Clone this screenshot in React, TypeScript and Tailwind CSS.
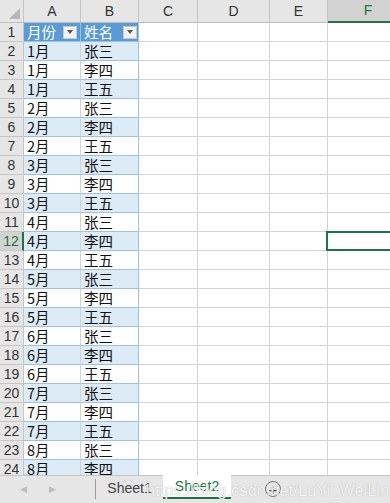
import React from 'react';

const cols = [
  { key: 'A', w: 'w-[57px]' },
  { key: 'B', w: 'w-[58px]' },
  { key: 'C', w: 'w-[59px]' },
  { key: 'D', w: 'w-[72px]' },
  { key: 'E', w: 'w-[58px]' },
  { key: 'F', w: 'w-[80px]' },
];

const names = ['张三', '李四', '王五'];
const rows: { month: string; name: string }[] = [];
for (let m = 1; m <= 8; m++) {
  for (const n of names) rows.push({ month: `${m}月`, name: n });
}

const cjk = { fontFamily: '"Noto Sans CJK SC", "Noto Sans", sans-serif' };
const latin = { fontFamily: '"Liberation Sans", Arial, sans-serif' };

function FilterButton() {
  return (
    <div className="w-[14px] h-[13px] bg-[#f2f2f2] border border-[#c9c9c9] flex items-center justify-center shrink-0">
      <div className="w-0 h-0 border-l-[3.5px] border-r-[3.5px] border-t-[4px] border-l-transparent border-r-transparent border-t-[#555]" />
    </div>
  );
}

export default function App() {
  return (
    <div className="w-[390px] h-[503px] overflow-hidden bg-white flex flex-col relative">
      {/* grid */}
      <div className="flex-1 overflow-hidden">
        {/* column headers */}
        <div className="flex h-[23px] bg-[#e6e6e6] border-b border-[#bdbdbd]" style={latin}>
          <div className="w-[24px] shrink-0 border-r border-[#c6c6c6] relative">
            <div
              className="absolute right-[3px] bottom-[3px] w-0 h-0"
              style={{ borderBottom: '11px solid #b7b7b7', borderLeft: '11px solid transparent' }}
            />
          </div>
          {cols.map((c) =>
            c.key === 'F' ? (
              <div key={c.key} className={`${c.w} shrink-0 bg-[#d2d2d2] border-b-2 border-[#217346] flex items-center justify-center text-[14px] text-[#217346] h-[23px]`}>
                {c.key}
              </div>
            ) : (
              <div key={c.key} className={`${c.w} shrink-0 border-r border-[#c6c6c6] flex items-center justify-center text-[14px] text-[#333]`}>
                {c.key}
              </div>
            )
          )}
        </div>

        {/* row 1: table header */}
        <div className="flex h-[19px]">
          <div className="w-[24px] shrink-0 bg-[#e6e6e6] border-r border-b border-[#c6c6c6] flex items-center justify-center text-[14px] text-[#333]" style={latin}>
            1
          </div>
          <div className="w-[57px] shrink-0 bg-[#5b9bd5] border-r border-b border-[#9bc2e6] flex items-center justify-between pl-[3px] pr-[3px] text-white text-[14.5px]" style={cjk}>
            <span className="leading-[18px]">月份</span>
            <FilterButton />
          </div>
          <div className="w-[58px] shrink-0 bg-[#5b9bd5] border-r border-b border-[#9bc2e6] flex items-center justify-between pl-[3px] pr-[1px] text-white text-[14.5px]" style={cjk}>
            <span className="leading-[18px]">姓名</span>
            <FilterButton />
          </div>
          <div className="w-[59px] shrink-0 border-r border-b border-[#d4d4d4]" />
          <div className="w-[72px] shrink-0 border-r border-b border-[#d4d4d4]" />
          <div className="w-[58px] shrink-0 border-r border-b border-[#d4d4d4]" />
          <div className="w-[80px] shrink-0 border-r border-b border-[#d4d4d4]" />
        </div>

        {rows.map((r, i) => {
          const n = i + 2;
          const band = n % 2 === 0 ? 'bg-[#ddebf7]' : 'bg-white';
          const sel = n === 12;
          return (
            <div key={n} className="flex h-[19px]">
              <div
                className={`w-[24px] shrink-0 border-b border-[#c6c6c6] flex items-center justify-center text-[14px] ${
                  sel ? 'bg-[#d2d2d2] text-[#217346] border-r-2 border-r-[#217346]' : 'bg-[#e6e6e6] text-[#333] border-r border-r-[#c6c6c6]'
                }`}
                style={latin}
              >
                {n}
              </div>
              <div className={`w-[57px] shrink-0 ${band} border-r border-r-[#d4d4d4] border-b border-b-[#9bc2e6] pl-[3px] text-[14.5px] leading-[18px] text-[#111]`} style={cjk}>
                {r.month}
              </div>
              <div className={`w-[58px] shrink-0 ${band} border-r border-r-[#9bc2e6] border-b border-b-[#9bc2e6] pl-[3px] text-[14.5px] leading-[18px] text-[#111]`} style={cjk}>
                {r.name}
              </div>
              <div className="w-[59px] shrink-0 border-r border-b border-[#d4d4d4]" />
              <div className="w-[72px] shrink-0 border-r border-b border-[#d4d4d4]" />
              <div className="w-[58px] shrink-0 border-r border-b border-[#d4d4d4]" />
              <div className="w-[80px] shrink-0 border-r border-b border-[#d4d4d4] relative">
                {sel && <div className="absolute -top-[1px] -bottom-[1px] -left-[2px] -right-[10px] border-y-2 border-l-2 border-[#217346]" />}
              </div>
            </div>
          );
        })}
      </div>

      {/* sheet tabs */}
      <div className="h-[28px] shrink-0 bg-[#e6e6e6] border-t border-[#c6c6c6] flex items-start relative" style={latin}>
        <div className="w-[95px] h-[27px] flex items-center text-[#bdbdbd] text-[9px]">
          <span className="ml-[20px]">◀</span>
          <span className="ml-[22px]">▶</span>
        </div>
        <div className="w-px h-[20px] bg-[#9a9a9a] mt-[3px]" />
        <div className="w-[67px] h-[24px] flex items-center justify-center text-[14px] text-[#444]">Sheet1</div>
        <div className="w-[68px] h-[24px] -mt-px bg-white border-b-2 border-[#217346] flex items-center justify-center text-[14px] text-[#217346]">
          Sheet2
        </div>
        <div className="ml-[34px] mt-[5px] w-[16px] h-[16px] rounded-full border-[1.5px] border-[#777] flex items-center justify-center text-[#555] text-[15px] leading-none">
          +
        </div>
        {/* watermark */}
        <div
          className="absolute left-[146px] top-[3px] text-[16px] text-white/85 tracking-[0.2px] pointer-events-none"
          style={{ ...latin, textShadow: '0 0 1px rgba(110,110,110,0.55)' }}
        >
          https://blog.csdn.net/LuYi_WeiLin
        </div>
      </div>
    </div>
  );
}
